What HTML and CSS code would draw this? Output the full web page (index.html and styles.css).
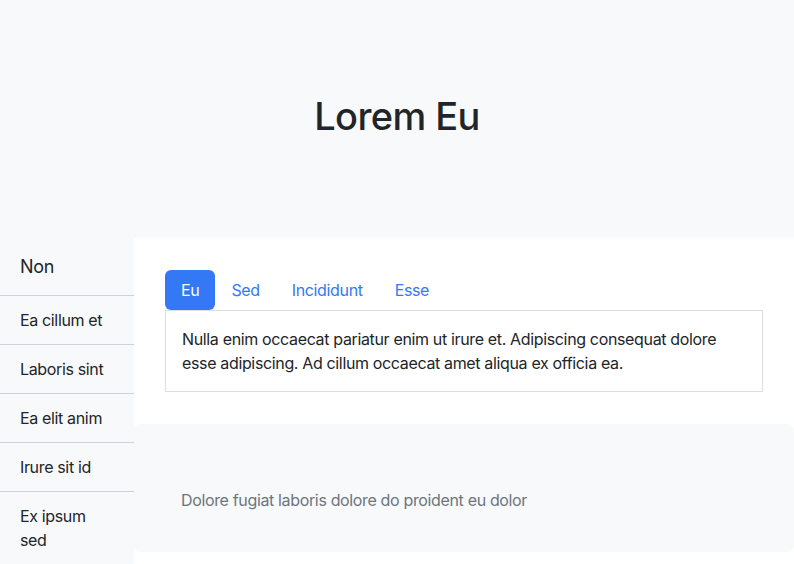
FILE: index.html
```html
<!DOCTYPE html>
<html lang="en">
<head>
<meta charset="utf-8">
<title>Lorem Eu</title>
<link rel="stylesheet" href="styles.css">
</head>
<body>
<header class="hero">
  <h1 class="hero-title">Lorem Eu</h1>
</header>
<div class="layout">
  <aside class="sidebar">
    <div class="sidebar-head">Non</div>
    <ul class="sidebar-list">
      <li class="sidebar-item">Ea cillum et</li>
      <li class="sidebar-item">Laboris sint</li>
      <li class="sidebar-item">Ea elit anim</li>
      <li class="sidebar-item">Irure sit id</li>
      <li class="sidebar-item">Ex ipsum sed</li>
    </ul>
  </aside>
  <main class="main">
    <section class="tabs-section">
      <nav class="tabs">
        <a class="tab tab-active">Eu</a>
        <a class="tab">Sed</a>
        <a class="tab">Incididunt</a>
        <a class="tab">Esse</a>
      </nav>
      <div class="tab-panel">
        Nulla enim occaecat pariatur enim ut irure et. Adipiscing consequat dolore esse adipiscing. Ad cillum occaecat amet aliqua ex officia ea.
      </div>
    </section>
    <section class="note">
      <p class="note-text">Dolore fugiat laboris dolore do proident eu dolor</p>
    </section>
  </main>
</div>
</body>
</html>
```
FILE: styles.css
```css
* { box-sizing: border-box; }
html, body { margin: 0; padding: 0; }
body {
  font-family: Inter, "Noto Sans", "Liberation Sans", sans-serif;
  font-size: 16px;
  line-height: 24px;
  letter-spacing: -0.35px;
  color: #212529;
  background: #ffffff;
}
.hero {
  background: #f8f9fa;
  height: 238px;
  display: flex;
  align-items: center;
  justify-content: center;
  padding-bottom: 6px;
}
.hero-title {
  margin: 0;
  font-size: 38px;
  font-weight: 500;
  line-height: 48px;
  letter-spacing: -0.6px;
  color: #212529;
}
.layout {
  display: flex;
  align-items: stretch;
  min-height: 340px;
}
.sidebar {
  width: 134px;
  flex: 0 0 134px;
  background: #f8f9fa;
}
.sidebar-head {
  font-size: 18px;
  line-height: 25px;
  padding: 16px 20px;
  border-bottom: 1px solid #cfd1d4;
}
.sidebar-list {
  list-style: none;
  margin: 0;
  padding: 0;
}
.sidebar-item {
  padding: 12px 20px;
  border-bottom: 1px solid #cfd1d4;
}
.sidebar-item:last-child { border-bottom: none; }
.main {
  flex: 1;
  background: #ffffff;
}
.tabs-section {
  padding: 32px 31px 32px;
}
.tabs {
  display: flex;
}
.tab {
  padding: 8px 16px;
  color: #3478f6;
  border-radius: 6px;
  text-decoration: none;
}
.tab-active {
  background: #3478f6;
  color: #ffffff;
}
.tab-panel {
  border: 1px solid #dcdee2;
  padding: 16px;
}
.note {
  background: #f8f9fa;
  border-radius: 6px;
  padding: 64px 48px 40px 47px;
}
.note-text {
  margin: 0;
  color: #6c757d;
}
```
